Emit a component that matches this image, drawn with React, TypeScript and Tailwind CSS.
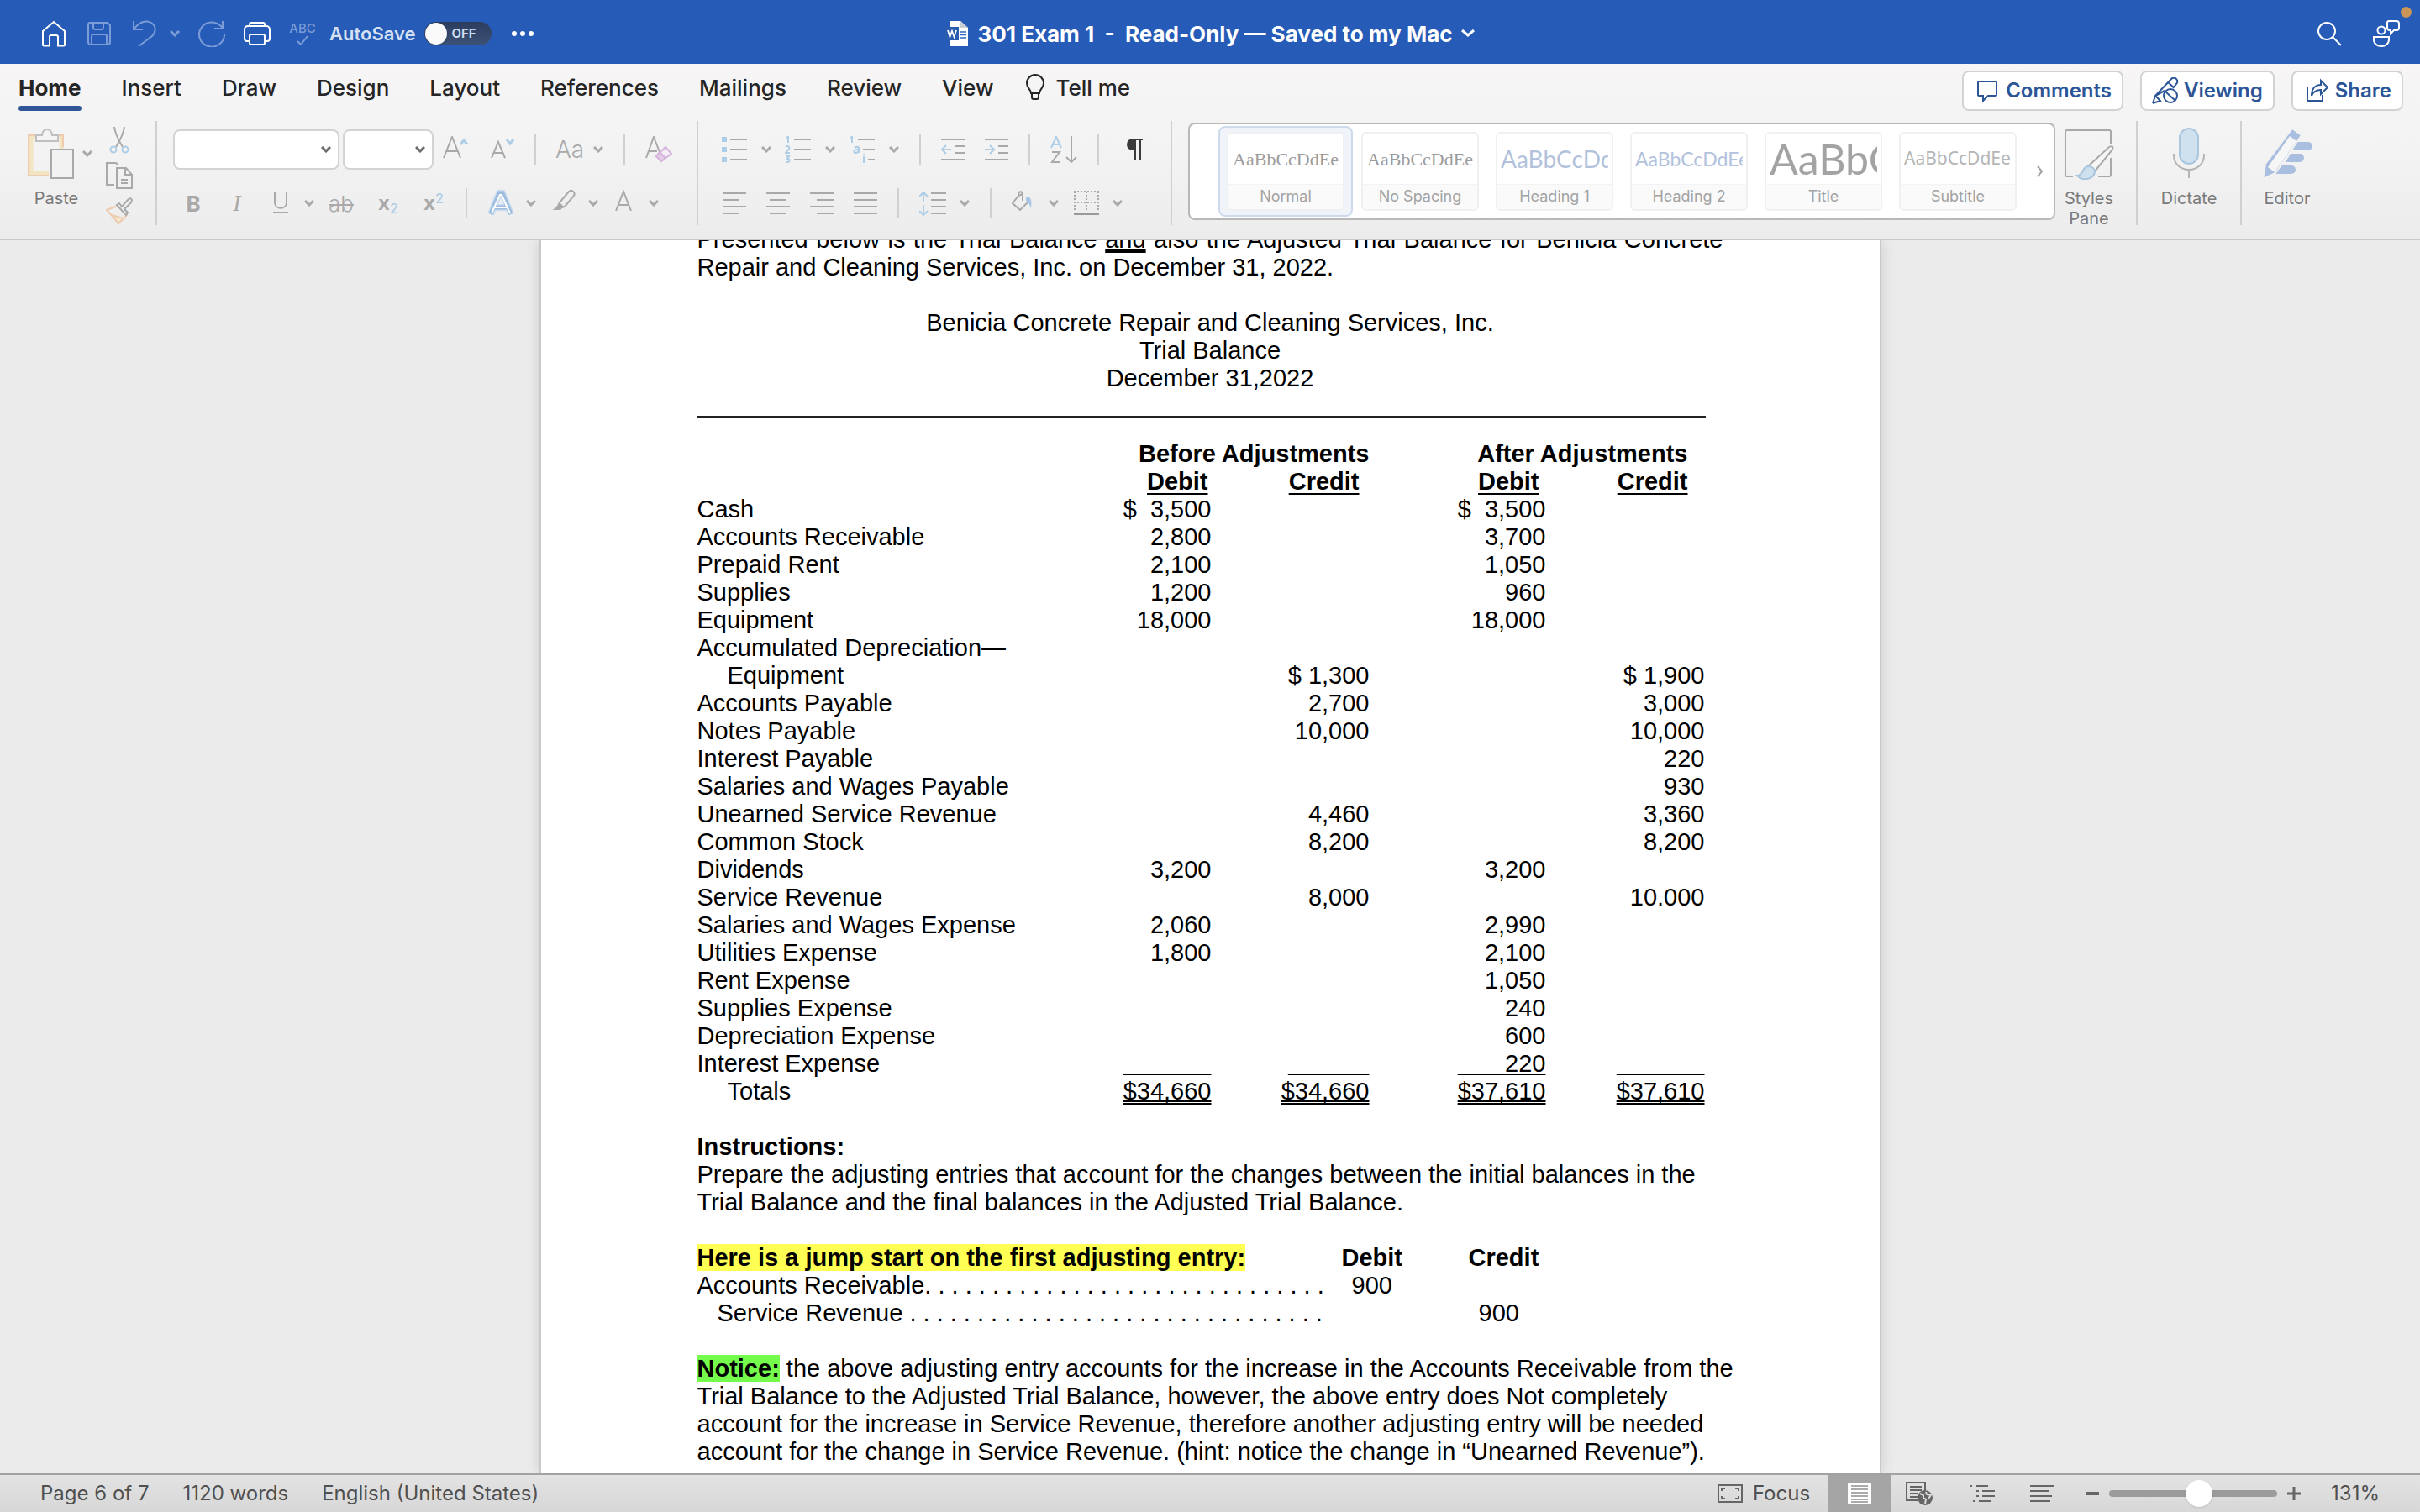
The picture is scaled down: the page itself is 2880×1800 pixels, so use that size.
import type { ReactNode } from "react";

const ui = "font-[Inter,'Liberation_Sans',sans-serif]";

function Chevron({ className = "text-[#a9a9a9]" }: { className?: string }) {
  return (
    <svg viewBox="0 0 12 8" className={`w-3 h-2 shrink-0 ${className}`} fill="none" stroke="currentColor" strokeWidth="3">
      <path d="M1 1l5 5 5-5" />
    </svg>
  );
}

function Icon({ children, className = "w-8 h-8" }: { children: ReactNode; className?: string }) {
  return (
    <svg viewBox="0 0 32 32" className={`shrink-0 ${className}`} fill="none" stroke="currentColor" strokeWidth="2">
      {children}
    </svg>
  );
}

function Tool({ label, children, className = "w-8" }: { label: string; children: ReactNode; className?: string }) {
  return (
    <button aria-label={label} className={`h-12 shrink-0 flex items-center justify-center text-[#a9a9a9] ${className}`}>
      {children}
    </button>
  );
}

// tool with a drop-down arrow beside it
function Split({ label, children, className = "gap-4" }: { label: string; children: ReactNode; className?: string }) {
  return (
    <div className={`flex items-center shrink-0 ${className}`}>
      {children}
      <button aria-label={`${label} options`}>
        <Chevron />
      </button>
    </div>
  );
}

function Divider() {
  return <div className="w-0.5 h-9 bg-[#d0d0d0] shrink-0" />;
}

function GroupDivider() {
  return <div className="w-0.5 h-[124px] bg-[#d0d0d0] shrink-0" />;
}

function TitleBar() {
  return (
    <header className="h-[76px] pt-1 bg-[#265bb7] text-white grid grid-cols-[1fr_auto_1fr] items-center shrink-0">
      <div className="flex items-center pl-12">
        <div className="flex items-center gap-[22px]">
          <button aria-label="Home">
            <Icon>
              <path d="M3 13L16 2l13 11v16a1.500 1.500 0 0 1-1.500 1.500H21V20a2 2 0 0 0-2-2h-6a2 2 0 0 0-2 2v10.500H4.500A1.500 1.500 0 0 1 3 29z" />
            </Icon>
          </button>
          <button aria-label="Save" className="text-[#7b9cd6]">
            <Icon>
              <path d="M5 3h21l3 3v20a3 3 0 0 1-3 3H6a3 3 0 0 1-3-3V5a2 2 0 0 1 2-2zM9 3v6a2 2 0 0 0 2 2h8a2 2 0 0 0 2-2V3M7 29V19a2 2 0 0 1 2-2h14a2 2 0 0 1 2 2v10" />
            </Icon>
          </button>
          <div className="flex items-center gap-3.5">
            <button aria-label="Undo" className="text-[#7b9cd6]">
              <Icon>
                <path d="M3 1v10h11M3 11C9 3 17-1 24 3c6 4 6 11 1 16L9 31" />
              </Icon>
            </button>
            <button aria-label="Undo options">
              <Chevron className="text-[#7b9cd6]" />
            </button>
          </div>
          <button aria-label="Redo" className="text-[#7b9cd6]">
            <Icon>
              <path d="M29 1v9H19M28.500 9A15 14.500 0 1 0 31 16" />
            </Icon>
          </button>
          <button aria-label="Print">
            <Icon>
              <path d="M7 8V5a2 2 0 0 1 2-2h14a2 2 0 0 1 2 2v3M7 25H4a3 3 0 0 1-3-3V11a4 4 0 0 1 4-4h22a4 4 0 0 1 4 4v11a3 3 0 0 1-3 3h-3M9 17h14a2 2 0 0 1 2 2v8a2 2 0 0 1-2 2H9a2 2 0 0 1-2-2v-8a2 2 0 0 1 2-2z" />
            </Icon>
          </button>
          <button aria-label="Spelling" className="w-8 flex flex-col items-center text-[#7b9cd6]">
            <span className="text-[15px] leading-4 font-medium">ABC</span>
            <svg viewBox="0 0 14 12" className="w-[14px] h-3" fill="none" stroke="currentColor" strokeWidth="2">
              <path d="M1 7l4 4 8-10" />
            </svg>
          </button>
        </div>
        <label className="ml-4 flex items-center gap-2.5 text-[22px] font-semibold text-[#d5e0f3]">
          AutoSave
          <input type="checkbox" className="peer sr-only" />
          <span className="w-20 h-7 rounded-full bg-linear-to-b from-[#2b3d5e] to-[#3d5277] flex items-center gap-1.5 pl-px text-[15px] font-semibold">
            <span className="w-[26px] h-[26px] rounded-full bg-[#fafafa] shadow" />
            OFF
          </span>
        </label>
        <button aria-label="More" className="ml-6">
          <svg viewBox="0 0 26 8" className="w-[26px] h-2" fill="currentColor">
            <circle cx="3" cy="4" r="3" />
            <circle cx="13" cy="4" r="3" />
            <circle cx="23" cy="4" r="3" />
          </svg>
        </button>
      </div>
      <button className="flex items-center gap-2.5 text-[26px] font-bold whitespace-pre">
        <svg viewBox="0 0 28 30" className="w-7 h-[30px]">
          <path d="M5 0h13l9 8v22H5z" fill="#fff" />
          <path d="M18 0v8h9z" fill="#c9cdd4" />
          <path d="M17 13h8M17 16.500h8M17 20h8" stroke="#2b66c4" strokeWidth="1.500" />
          <rect x="0" y="7" width="16" height="16" fill="#2a5cb0" />
          <path d="M3 11l2.500 8L8 12l2.500 7L13 11" fill="none" stroke="#fff" strokeWidth="1.800" />
        </svg>
        <span>301 Exam 1{"  -  "}Read-Only — Saved to my Mac</span>
        <svg viewBox="0 0 16 10" className="w-4 h-2.5" fill="none" stroke="currentColor" strokeWidth="3">
          <path d="M1 1l7 6 7-6" />
        </svg>
      </button>
      <div className="flex items-center justify-end gap-9 pr-6">
        <button aria-label="Search">
          <Icon>
            <circle cx="13" cy="13" r="10" />
            <path d="M20 20l10 10" />
          </Icon>
        </button>
        <button aria-label="Account" className="relative">
          <Icon>
            <circle cx="10" cy="12" r="4.500" />
            <path d="M1 20h18v3c0 5-4 8-9 8s-9-3-9-8zM19 1h9a3 3 0 0 1 3 3v5a3 3 0 0 1-3 3h-3l-4 4v-4h-1a3 3 0 0 1-3-3V3a2 2 0 0 1 2-2z" />
          </Icon>
          <span className="absolute -top-4 -right-3.5 w-[13px] h-[13px] rounded-full bg-[#cb9558]" />
        </button>
      </div>
    </header>
  );
}

const tabs = ["Insert", "Draw", "Design", "Layout", "References", "Mailings", "Review", "View"];

function ActionButton({ label, children }: { label: string; children: ReactNode }) {
  return (
    <button className="h-12 px-3 rounded-lg border-2 border-[#d3d3d3] bg-white flex items-center gap-1.5 text-[24px] font-semibold text-[#2b5597]">
      {children}
      {label}
    </button>
  );
}

function TabBar() {
  return (
    <nav className="h-[60px] pl-[22px] pr-5 flex items-start justify-between text-[26px] font-medium text-[#252525]">
      <div className="flex gap-12 pt-3">
        <a href="#home" className="font-bold leading-[34px] flex flex-col gap-1">
          Home
          <span className="h-1.5 rounded-full bg-[#2f5597]" />
        </a>
        {tabs.map((tab) => (
          <a key={tab} href={`#${tab.toLowerCase()}`} className="leading-[34px]">
            {tab}
          </a>
        ))}
        <a href="#tell-me" className="-ml-2.5 leading-[34px] flex gap-3 self-start">
          <svg viewBox="0 0 24 32" className="w-6 h-8" fill="none" stroke="currentColor" strokeWidth="2">
            <path d="M7 23c0-5-5-6-5-12a10 10 0 0 1 20 0c0 6-5 7-5 12zM8 23v5a2 2 0 0 0 2 2h4a2 2 0 0 0 2-2v-5" />
          </svg>
          Tell me
        </a>
      </div>
      <div className="flex gap-5 pt-2">
        <ActionButton label="Comments">
          <Icon>
            <path d="M6 5h20a1 1 0 0 1 1 1v15a1 1 0 0 1-1 1h-9l-6 6v-6H6a1 1 0 0 1-1-1V6a1 1 0 0 1 1-1z" />
          </Icon>
        </ActionButton>
        <ActionButton label="Viewing">
          <Icon>
            <path d="M1 31l3-9L23 2a4 4 0 0 1 6 0 4 4 0 0 1 0 6l-4 5M19 6l7 6M4 22l6 6-9 3M15 16L4 22" />
            <circle cx="22" cy="22" r="8" />
            <path d="M16 17l12 11" />
          </Icon>
        </ActionButton>
        <ActionButton label="Share">
          <Icon>
            <path d="M5 11v17h18v-7M21 4l8 8-8 8v-5c-6 0-9 2-11 7 0-8 4-13 11-13z" />
          </Icon>
        </ActionButton>
      </div>
    </nav>
  );
}

function ClipboardGroup() {
  return (
    <div className="flex pl-8 pr-[27px] gap-4 shrink-0">
      <div className="flex flex-col items-center">
        <div className="flex items-center pt-2 gap-2.5">
          <button aria-label="Paste icon">
            <svg viewBox="0 0 56 62" className="w-14 h-[62px]" fill="none" strokeWidth="2">
              <path d="M11 11H5v43h21M37 11h4v14" stroke="#f3e4c2" strokeWidth="5" />
              <path d="M10 9H2v48h24M37 9h6v14" stroke="#eccbb0" />
              <path d="M11 16V9h7c0-3 2-7 6-7s6 4 6 7h7v7z" stroke="#c0c0c0" fill="#f4f4f4" />
              <rect x="29" y="26" width="26" height="34" stroke="#a9a9a9" fill="#f2f2f2" />
            </svg>
          </button>
          <button aria-label="Paste options">
            <Chevron />
          </button>
        </div>
        <button className="text-[20px] leading-6 pt-2.5 pr-2 text-[#7a7a7a]">Paste</button>
      </div>
      <div className="flex flex-col pt-[7px] gap-2.5">
        <button aria-label="Cut" className="text-[#a9a9a9]">
          <Icon>
            <path d="M10 0c1 8 5 16 10 24M22 0c-1 8-5 16-10 24" />
            <circle cx="9" cy="27" r="3.500" stroke="#aecde6" />
            <circle cx="23" cy="27" r="3.500" stroke="#aecde6" />
          </Icon>
        </button>
        <button aria-label="Copy" className="text-[#a9a9a9]">
          <Icon>
            <path d="M10 27H1V1h11l3 3M13 7h11l7 8v16H13zM23 7v8h8M18 21h8M18 25h8" />
          </Icon>
        </button>
        <button aria-label="Format painter" className="text-[#a9a9a9]">
          <Icon>
            <path d="M14 10L1 15c4 4 9 10 14 16l10-10z" stroke="#eccbb0" />
            <path d="M7 21l14 4-6 6z" fill="#f3e9cc" stroke="#eccbb0" />
            <path d="M13 9l3-2 3 4 8-9c3-2 5 1 3 4l-8 8 4 4-2 3z" fill="#f2f2f2" />
          </Icon>
        </button>
      </div>
    </div>
  );
}

function FontGroup() {
  return (
    <div className="w-[642px] pl-[19px] pt-2.5 flex flex-col gap-4 shrink-0">
      <div className="flex items-center gap-6">
        <div className="flex items-center gap-1">
          <div className="relative">
            <select aria-label="Font" className="w-[198px] h-12 rounded-lg border-2 border-[#d3d3d3] bg-white appearance-none" />
            <span className="absolute right-2.5 top-5 pointer-events-none">
              <Chevron className="text-[#6b6b6b]" />
            </span>
          </div>
          <div className="relative">
            <select aria-label="Font size" className="w-[108px] h-12 rounded-lg border-2 border-[#d3d3d3] bg-white appearance-none" />
            <span className="absolute right-2.5 top-5 pointer-events-none">
              <Chevron className="text-[#6b6b6b]" />
            </span>
          </div>
          <Tool label="Grow font" className="ml-1 w-9">
            <Icon>
              <path d="M2 26L12 1l10 25M5 18h14" />
              <path d="M22 10l4-5 4 5" stroke="#aecde6" strokeWidth="3" />
            </Icon>
          </Tool>
        </div>
        <Tool label="Shrink font" className="w-7">
          <Icon>
            <path d="M3 26L11 7l8 19M6 20h10" />
            <path d="M21 4l4 5 4-5" stroke="#aecde6" strokeWidth="3" />
          </Icon>
        </Tool>
        <Divider />
        <Split label="Change case" className="gap-3">
          <Tool label="Change case" className="w-8">
            <span className="text-[28px] font-light">Aa</span>
          </Tool>
        </Split>
        <Divider />
        <Tool label="Clear formatting">
          <Icon>
            <path d="M1 26L10 1l7 18M4 18h10" />
            <path d="M24 13l7 8-12 9-6-6z" stroke="#d5b3dc" fill="#f6eef7" />
            <path d="M17 19l7 7-5 4-6-6z" fill="#e3cde8" stroke="#d5b3dc" />
          </Icon>
        </Tool>
      </div>
      <div className="flex items-center gap-6 pl-2.5">
        <Tool label="Bold" className="w-7">
          <span className="text-[26px] font-bold">B</span>
        </Tool>
        <Tool label="Italic" className="w-7">
          <span className="text-[28px] italic font-['Liberation_Serif',serif]">I</span>
        </Tool>
        <div className="flex gap-4">
          <Split label="Underline" className="gap-3.5">
            <Tool label="Underline" className="w-7">
              <svg viewBox="0 0 20 26" className="w-5 h-[26px]" fill="none" stroke="currentColor" strokeWidth="2">
                <path d="M3 0v12c0 9 14 9 14 0V0M1 24h18" />
              </svg>
            </Tool>
          </Split>
          <Tool label="Strikethrough">
            <span className="text-[26px] font-light line-through decoration-2">ab</span>
          </Tool>
        </div>
        <Tool label="Subscript">
          <span className="text-[24px] font-bold">
            x<sub className="text-[16px] font-medium text-[#aecde6]">2</sub>
          </span>
        </Tool>
        <Tool label="Superscript" className="w-7">
          <span className="text-[24px] font-bold">
            x<sup className="text-[16px] font-medium text-[#aecde6]">2</sup>
          </span>
        </Tool>
        <Divider />
        <div className="flex gap-4">
          <Split label="Text effects" className="gap-3.5">
            <Tool label="Text effects">
              <Icon>
                <path d="M4 29L14 4h4l10 25M9 21h14" stroke="#c9dcf0" strokeWidth="8" />
                <path d="M4 29L14 4h4l10 25M9 21h14" stroke="#9dbcdf" strokeWidth="5" />
                <path d="M5 28L15 6h2l10 22M9 21h14" stroke="#fff" strokeWidth="2" />
              </Icon>
            </Tool>
          </Split>
          <Split label="Highlight" className="gap-3.5">
            <Tool label="Highlight">
              <Icon>
                <path d="M12 15L23 2c4-3 8 1 6 5L18 20c-3 2-8-2-6-5z" />
                <path d="M12 15c-4 4-3 6-9 9h10l4-4z" fill="currentColor" stroke="none" />
              </Icon>
            </Tool>
          </Split>
          <Split label="Font color">
            <Tool label="Font color" className="w-7">
              <Icon>
                <path d="M7 25L16 2l9 23M10 18h12" />
              </Icon>
            </Tool>
          </Split>
        </div>
      </div>
    </div>
  );
}

function ParagraphGroup() {
  return (
    <div className="w-[562px] pl-[27px] pt-2.5 flex flex-col gap-4 shrink-0">
      <div className="flex items-center gap-6">
        <div className="flex gap-4">
          <Split label="Bullets">
            <Tool label="Bullets">
              <Icon>
                <path d="M11 4h20M11 16h20M11 28h20" />
                <path d="M1 4h6M1 16h6M1 28h6" stroke="#aecde6" strokeWidth="6" />
              </Icon>
            </Tool>
          </Split>
          <Split label="Numbering">
            <Tool label="Numbering">
              <Icon>
                <path d="M11 4h20M11 16h20M11 28h20" />
                <path d="M2 2l2-1v7M1 13c2-2 5-1 4 2l-4 5h5M1 24h4l-2 3c4 0 3 4 0 4H1" stroke="#aecde6" />
              </Icon>
            </Tool>
          </Split>
          <Split label="Multilevel list">
            <Tool label="Multilevel list">
              <Icon>
                <path d="M11 4h20M17 16h14M23 28h8" />
                <path d="M2 2l2-1v7M7 14c2-2 6-2 5 2v4M12 16c-6-1-7 4-4 4s4-2 4-4M18 24v8M18 21v2" stroke="#aecde6" />
              </Icon>
            </Tool>
          </Split>
        </div>
        <Divider />
        <Tool label="Decrease indent" className="w-7">
          <Icon>
            <path d="M2 4h28M18 12h12M18 20h12M2 28h28" />
            <path d="M14 16H3M8 11l-5 5 5 5" stroke="#aecde6" />
          </Icon>
        </Tool>
        <Tool label="Increase indent" className="w-7">
          <Icon>
            <path d="M2 4h28M18 12h12M18 20h12M2 28h28" />
            <path d="M2 16h11M8 11l5 5-5 5" stroke="#aecde6" />
          </Icon>
        </Tool>
        <Divider />
        <Tool label="Sort">
          <Icon>
            <path d="M1 14L7 1l6 13M3 10h8" stroke="#aecde6" />
            <path d="M2 19h9L2 31h10M25 0v30M19 25l6 6 6-6" />
          </Icon>
        </Tool>
        <Divider />
        <Tool label="Show formatting marks" className="w-9">
          <svg viewBox="0 0 20 26" className="w-5 h-[26px]">
            <path d="M8 0h12v2h-2v23h-2V2h-4v23h-2V14H8A7 7 0 0 1 8 0z" fill="#3b3b3b" />
          </svg>
        </Tool>
      </div>
      <div className="flex items-center gap-6 pl-0.5">
        <Tool label="Align left" className="w-7">
          <Icon>
            <path d="M2 4h28M2 12h20M2 20h28M2 28h20" />
          </Icon>
        </Tool>
        <Tool label="Center" className="w-7">
          <Icon>
            <path d="M2 4h28M6 12h20M2 20h28M6 28h20" />
          </Icon>
        </Tool>
        <Tool label="Align right" className="w-7">
          <Icon>
            <path d="M2 4h28M10 12h20M2 20h28M10 28h20" />
          </Icon>
        </Tool>
        <Tool label="Justify" className="w-7">
          <Icon>
            <path d="M2 4h28M2 12h28M2 20h28M2 28h28" />
          </Icon>
        </Tool>
        <Divider />
        <Split label="Line spacing">
          <Tool label="Line spacing">
            <Icon>
              <path d="M14 4h18M14 12h18M14 20h18M14 28h18" />
              <path d="M5 14V3M0 8l5-5 5 5M5 18v12M0 25l5 5 5-5" stroke="#aecde6" />
            </Icon>
          </Tool>
        </Split>
        <Divider />
        <div className="flex gap-[18px]">
          <Split label="Shading">
            <Tool label="Shading" className="w-7">
              <Icon>
                <path d="M15 12V6c0-5-5-5-5 0v1L3 16l9 8 10-10M10 7l5-2 0 8" />
                <path d="M19 8c7 0 7 6 6 14-2-5-3-8-6-9z" fill="#a9c6e6" stroke="none" />
              </Icon>
            </Tool>
          </Split>
          <Split label="Borders">
            <Tool label="Borders" className="w-[30px]">
              <Icon>
                <path d="M1 2h30M1 15h30M2 2v24M16 2v24M30 2v24" strokeDasharray="2 2" />
                <path d="M1 29h30" stroke="#9a9a9a" />
              </Icon>
            </Tool>
          </Split>
        </div>
      </div>
    </div>
  );
}

const styles = [
  { name: "Normal", sample: "AaBbCcDdEe", font: "justify-center font-['Liberation_Serif',serif] text-[22px] text-[#9c9c9c]" },
  { name: "No Spacing", sample: "AaBbCcDdEe", font: "justify-center font-['Liberation_Serif',serif] text-[22px] text-[#9c9c9c]" },
  { name: "Heading 1", sample: "AaBbCcDdEe", font: "font-[Lato,sans-serif] text-[28px] text-[#b3c2dc]" },
  { name: "Heading 2", sample: "AaBbCcDdEe", font: "font-[Lato,sans-serif] text-[23px] text-[#b3c2dc]" },
  { name: "Title", sample: "AaBbCcDdEe", font: "font-[Lato,sans-serif] text-[50px] text-[#a3a3a3]" },
  { name: "Subtitle", sample: "AaBbCcDdEe", font: "font-['Noto_Sans',sans-serif] text-[21px] text-[#b5b5b5]" },
];

function StyleGallery() {
  return (
    <div className="mt-0.5 h-[116px] w-[1032px] shrink-0 rounded-lg border-2 border-[#b8b8b8] bg-white flex items-center justify-between pl-[34px] pr-3">
      <div className="flex">
        {styles.map((style, i) => (
          <button
            key={style.name}
            className={`w-40 h-[108px] px-2 flex items-center rounded-lg border-2 ${i === 0 ? "bg-[#f0f4fa] border-[#ccdaeb]" : "border-transparent"}`}
          >
            <span className="w-full h-[94px] rounded-md border-2 border-[#f0f0f0] bg-white overflow-hidden flex flex-col">
              <span className="h-[60px] mx-1 overflow-hidden">
                <span className={`h-full flex items-center whitespace-nowrap ${style.font}`}>{style.sample}</span>
              </span>
              <span className="flex-1 border-t border-[#f3f3f3] bg-[#fafafa] text-[18px] leading-7 text-[#a3a3a3]">{style.name}</span>
            </span>
          </button>
        ))}
      </div>
      <button aria-label="More styles">
        <svg viewBox="0 0 8 14" className="w-2 h-3.5" fill="none" stroke="#a0a0a0" strokeWidth="2">
          <path d="M1 1l5 6-5 6" />
        </svg>
      </button>
    </div>
  );
}

function BigTool({ label, children, className }: { label: string; children: ReactNode; className: string }) {
  return (
    <button className={`pt-2 flex flex-col items-center gap-2.5 shrink-0 text-[20px] leading-6 text-[#7a7a7a] ${className}`}>
      {children}
      <span>{label}</span>
    </button>
  );
}

function Ribbon() {
  return (
    <div className="bg-linear-to-b from-[#f7f5f6] via-[#f3f3f3] to-[#ececec] border-b-2 border-[#c8c8c8] shrink-0">
      <TabBar />
      <div className="h-37 pt-2 flex items-start">
        <ClipboardGroup />
        <GroupDivider />
        <FontGroup />
        <GroupDivider />
        <ParagraphGroup />
        <GroupDivider />
        <div className="w-[19px] shrink-0" />
        <StyleGallery />
        <BigTool label="Styles Pane" className="w-20">
          <svg viewBox="0 0 62 62" className="w-[62px] h-[62px]" fill="none" stroke="#a9a9a9" strokeWidth="2">
            <path d="M12 58H5a2 2 0 0 1-2-2V5a2 2 0 0 1 2-2h50a2 2 0 0 1 2 2v15M57 36v20a2 2 0 0 1-2 2H42" />
            <path d="M30 46L54 24c3-3 7-2 5 2L38 52z" fill="#f6f6f6" />
            <path d="M17 57c8 0 5-10 13-11 5 0 8 3 8 7-2 9-15 11-21 4z" fill="#cfe0ee" stroke="#a9c6de" />
          </svg>
        </BigTool>
        <div className="w-4 shrink-0" />
        <GroupDivider />
        <BigTool label="Dictate" className="w-[122px]">
          <svg viewBox="0 0 38 62" className="w-[38px] h-[62px]" fill="none" stroke="#b5b5b5" strokeWidth="2">
            <rect x="8" y="1" width="22" height="42" rx="11" fill="#cfe0ef" stroke="#a9c6de" />
            <path d="M1 31v2c0 10 8 17 18 17s18-7 18-17v-2M19 50v10" />
          </svg>
        </BigTool>
        <GroupDivider />
        <BigTool label="Editor" className="w-[108px]">
          <svg viewBox="0 0 62 62" className="w-[62px] h-[62px]" fill="#aabfe0">
            <path d="M43 17h13a5 5 0 0 1 0 10H37zM35 31h11a5 5 0 0 1 0 10H29zM25 45h11a5 5 0 0 1 0 10H15z" />
            <path d="M37 1l11 8-31 45L2 61l3-18z" stroke="#f2f2f2" strokeWidth="2" />
            <path d="M34 10l8 6-26 37-8-6z" fill="#f6f6f6" />
          </svg>
        </BigTool>
      </div>
    </div>
  );
}

const accounts = [
  ["Cash", "$\u00a0\u00a03,500", "", "$\u00a0\u00a03,500", ""],
  ["Accounts Receivable", "2,800", "", "3,700", ""],
  ["Prepaid Rent", "2,100", "", "1,050", ""],
  ["Supplies", "1,200", "", "960", ""],
  ["Equipment", "18,000", "", "18,000", ""],
  ["Accumulated Depreciation—", "", "", "", ""],
  ["  Equipment", "", "$ 1,300", "", "$ 1,900"],
  ["Accounts Payable", "", "2,700", "", "3,000"],
  ["Notes Payable", "", "10,000", "", "10,000"],
  ["Interest Payable", "", "", "", "220"],
  ["Salaries and Wages Payable", "", "", "", "930"],
  ["Unearned Service Revenue", "", "4,460", "", "3,360"],
  ["Common Stock", "", "8,200", "", "8,200"],
  ["Dividends", "3,200", "", "3,200", ""],
  ["Service Revenue", "", "8,000", "", "10.000"],
  ["Salaries and Wages Expense", "2,060", "", "2,990", ""],
  ["Utilities Expense", "1,800", "", "2,100", ""],
  ["Rent Expense", "", "", "1,050", ""],
  ["Supplies Expense", "", "", "240", ""],
  ["Depreciation Expense", "", "", "600", ""],
];

const blank = "\u00a0";
const sumLine = "underline decoration-2 underline-offset-2 [text-decoration-skip-ink:none]";
const totalLine = "underline decoration-double decoration-2 underline-offset-1 [text-decoration-skip-ink:none]";

function TrialBalance() {
  return (
    <table className="table-fixed w-[1199px] text-right">
      <colgroup>
        <col className="w-[424px]" />
        <col className="w-[188px]" />
        <col className="w-[188px]" />
        <col className="w-[210px]" />
        <col className="w-[189px]" />
      </colgroup>
      <thead>
        <tr>
          <td />
          <th colSpan={2} className="p-0">Before Adjustments</th>
          <th colSpan={2} className="p-0 pr-5">After Adjustments</th>
        </tr>
        <tr className="underline decoration-2 underline-offset-4">
          <td />
          <th className="p-0 pr-1">Debit</th>
          <th className="p-0 pr-3">Credit</th>
          <th className="p-0 pr-2">Debit</th>
          <th className="p-0 pr-5">Credit</th>
        </tr>
      </thead>
      <tbody>
        {accounts.map(([name, ...amounts]) => (
          <tr key={name}>
            <td className={`p-0 text-left ${name.startsWith(" ") ? "pl-9" : ""}`}>{name.trim()}</td>
            {amounts.map((amount, i) => (
              <td key={i} className="p-0">{amount}</td>
            ))}
          </tr>
        ))}
        <tr>
          <td className="p-0 text-left">Interest Expense</td>
          <td className={`p-0 ${sumLine}`}>{blank.repeat(13)}</td>
          <td className={`p-0 ${sumLine}`}>{blank.repeat(12)}</td>
          <td className={`p-0 ${sumLine}`}>{blank.repeat(7)}220</td>
          <td className={`p-0 ${sumLine}`}>{blank.repeat(13)}</td>
        </tr>
        <tr>
          <td className="p-0 pl-9 text-left">Totals</td>
          <td className={`p-0 ${totalLine}`}>$34,660</td>
          <td className={`p-0 ${totalLine}`}>$34,660</td>
          <td className={`p-0 ${totalLine}`}>$37,610</td>
          <td className={`p-0 ${totalLine}`}>$37,610</td>
        </tr>
      </tbody>
    </table>
  );
}

function Document() {
  return (
    <main className="flex-1 min-h-0 overflow-hidden bg-[#ebebeb] flex justify-center">
      <article className="w-full max-w-[1597px] h-full pb-[9px] px-[186px] border-x-2 border-[#c9c9c9] bg-white shadow-[0_0_16px_#00000022] flex flex-col justify-end overflow-hidden font-['Liberation_Sans',Arial,sans-serif] text-[29px] leading-[33px] text-black whitespace-nowrap">
        <p className="whitespace-normal text-justify">
          Presented below is the Trial Balance <span className="underline decoration-5 underline-offset-1 [text-decoration-skip-ink:none]">and</span> also the Adjusted Trial Balance for Benicia Concrete
          Repair and Cleaning Services, Inc. on December 31, 2022.
        </p>
        <h1 className="pt-[33px] text-center">
          Benicia Concrete Repair and Cleaning Services, Inc.
          <br />
          Trial Balance
          <br />
          December 31,2022
        </h1>
        <hr className="mt-7 mb-[26px] w-[1200px] shrink-0 border-t-3 border-[#222]" />
        <TrialBalance />
        <h2 className="pt-[33px] font-bold">Instructions:</h2>
        <p>
          Prepare the adjusting entries that account for the changes between the initial balances in the
          <br />
          Trial Balance and the final balances in the Adjusted Trial Balance.
        </p>
        <table className="mt-[33px] table-fixed w-[1068px] text-left">
          <colgroup>
            <col className="w-[767px]" />
            <col className="w-[151px]" />
            <col className="w-[150px]" />
          </colgroup>
          <thead>
            <tr>
              <th className="p-0">
                <mark className="bg-[#ffff54]">Here is a jump start on the first adjusting entry:</mark>
              </th>
              <th className="p-0">Debit</th>
              <th className="p-0">Credit</th>
            </tr>
          </thead>
          <tbody>
            <tr>
              <td className="p-0">Accounts Receivable{". ".repeat(30)}</td>
              <td className="p-0 pl-3">900</td>
              <td />
            </tr>
            <tr>
              <td className="p-0 pl-6">Service Revenue {". ".repeat(31)}</td>
              <td />
              <td className="p-0 pl-3">900</td>
            </tr>
          </tbody>
        </table>
        <p className="pt-[33px]">
          <mark className="bg-[#75fb4c] font-bold">Notice:</mark> the above adjusting entry accounts for the increase in the Accounts Receivable from the
          <br />
          Trial Balance to the Adjusted Trial Balance, however, the above entry does Not completely
          <br />
          account for the increase in Service Revenue, therefore another adjusting entry will be needed
          <br />
          account for the change in Service Revenue. (hint: notice the change in “Unearned Revenue”).
        </p>
      </article>
    </main>
  );
}

function StatusBar() {
  return (
    <footer className="h-[46px] border-t-2 border-[#a2a2a2] bg-linear-to-b from-[#e3e3e3] to-[#d7d7d7] flex items-center justify-between pl-12 pr-12 text-[24px] text-[#505050] shrink-0">
      <div className="flex gap-10">
        <button>Page 6 of 7</button>
        <button>1120 words</button>
        <button>English (United States)</button>
      </div>
      <div className="h-full flex items-center text-[#666]">
        <button className="flex items-center gap-3 pr-[22px] text-[#505050]">
          <svg viewBox="0 0 30 22" className="w-[30px] h-[22px]" fill="none" stroke="#666" strokeWidth="2">
            <rect x="1" y="1" width="28" height="20" />
            <path d="M5 8V5h4M21 5h4v3M25 14v3h-4M9 17H5v-3" />
          </svg>
          Focus
        </button>
        <button aria-label="Print layout" className="w-[74px] h-full bg-[#a5a5a5] flex items-center justify-center">
          <svg viewBox="0 0 28 26" className="w-7 h-[26px]" fill="none">
            <rect width="28" height="26" rx="2" fill="#fff" />
            <path d="M4 4h20M4 8h20M4 12h20M4 16h20M4 20h20M4 23h20" stroke="#8f8f8f" strokeWidth="1.500" />
          </svg>
        </button>
        <div className="flex items-center pl-[18px] gap-[42px]">
          <button aria-label="Web layout">
            <svg viewBox="0 0 34 28" className="w-[34px] h-7" fill="none" stroke="currentColor" strokeWidth="2">
              <path d="M14 22H1V1h22v9M5 6h14M5 10h14M5 14h10M5 18h9" />
              <circle cx="23" cy="19" r="9" fill="currentColor" stroke="none" />
              <path d="M17 14l4 2v3l3 2-1 5M24 12l1 3 5 1-3 4" stroke="#ddd" />
            </svg>
          </button>
          <button aria-label="Outline">
            <svg viewBox="0 0 30 22" className="w-[30px] h-[22px]" stroke="currentColor" strokeWidth="2">
              <path d="M0 2h3M8 2h14M8 8h3M15 8h15M8 14h3M15 14h15M4 20h3M11 20h15" />
            </svg>
          </button>
          <button aria-label="Draft">
            <svg viewBox="0 0 28 22" className="w-7 h-[22px]" stroke="currentColor" strokeWidth="2">
              <path d="M0 2h28M0 8h23M0 14h26M0 20h24" />
            </svg>
          </button>
        </div>
        <div className="flex items-center pl-[38px] gap-3">
          <button aria-label="Zoom out">
            <svg viewBox="0 0 16 16" className="w-4 h-4" stroke="currentColor" strokeWidth="4">
              <path d="M0 8h16" />
            </svg>
          </button>
          <input
            type="range"
            aria-label="Zoom"
            min="0"
            max="100"
            defaultValue="54"
            className="w-[200px] h-2 rounded-full bg-[#9b9b9b] appearance-none [&::-webkit-slider-thumb]:appearance-none [&::-webkit-slider-thumb]:w-8 [&::-webkit-slider-thumb]:h-8 [&::-webkit-slider-thumb]:rounded-full [&::-webkit-slider-thumb]:bg-white [&::-webkit-slider-thumb]:shadow"
          />
          <button aria-label="Zoom in">
            <svg viewBox="0 0 16 16" className="w-4 h-4" stroke="currentColor" strokeWidth="3">
              <path d="M0 8h16M8 0v16" />
            </svg>
          </button>
        </div>
        <button className="pl-9 text-[#505050]">131%</button>
      </div>
    </footer>
  );
}

export default function App() {
  return (
    <div className={`h-screen flex flex-col overflow-hidden ${ui}`}>
      <TitleBar />
      <Ribbon />
      <Document />
      <StatusBar />
    </div>
  );
}
